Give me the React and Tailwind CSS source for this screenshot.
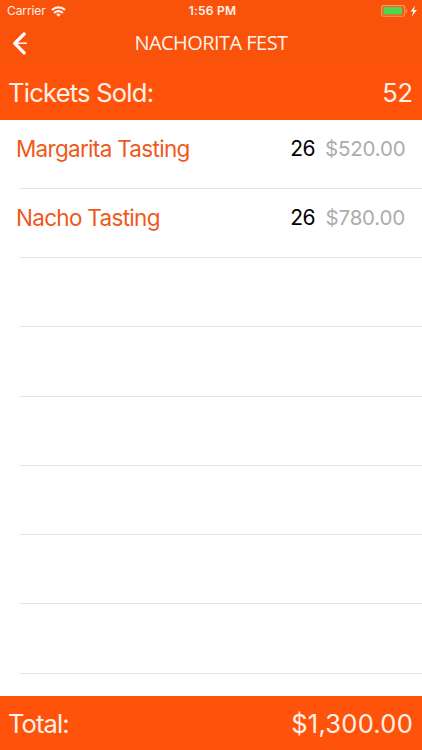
const tickets = [
  { name: "Margarita Tasting", sold: 26, amount: "$520.00" },
  { name: "Nacho Tasting", sold: 26, amount: "$780.00" },
];

const EMPTY_ROWS = 6;

const WifiIcon = () => (
  <svg width="15" height="11" viewBox="0 0 15 11" fill="none" stroke="#fff1e8" strokeWidth="2.1">
    <path d="M0.9 4.1a9.3 9.3 0 0 1 13.2 0" />
    <path d="M3.2 6.9a6.1 6.1 0 0 1 8.6 0" />
    <path d="M7.5 10.8 5.2 8.5a3.3 3.3 0 0 1 4.6 0z" fill="#fff1e8" stroke="none" />
  </svg>
);

const BatteryIcon = () => (
  <svg width="37" height="12" viewBox="0 0 37 12">
    <rect x="0.6" y="0.6" width="23.2" height="10.6" rx="2.2" fill="none" stroke="#ff9a66" strokeWidth="1.1" />
    <rect x="2.2" y="2" width="19" height="7.6" rx="0.8" fill="#4cd654" />
    <path d="M25.2 4.1a2 2 0 0 1 0 3.6z" fill="#ff9a66" />
    <path d="M34.2 0.5 29.6 6.4h2.6l-1.3 5 5-6.4h-2.9z" fill="#fff1e8" />
  </svg>
);

const BackIcon = () => (
  <svg width="16" height="23" viewBox="0 0 16 23" fill="none" stroke="#fff">
    <path d="M12.1 2 2.8 11.4l9.3 9.4" strokeWidth="3.3" strokeLinecap="round" strokeLinejoin="round" />
    <path d="M3 11.2h11.8" strokeWidth="1.5" />
  </svg>
);

const StatusBar = () => (
  <div className="grid h-[22px] grid-cols-3 items-center pr-1 pl-[7px] text-[12px] text-[#fff1e8]">
    <div className="flex items-center gap-[5px]">
      <span className="tracking-[-0.1px]">Carrier</span>
      <WifiIcon />
    </div>
    <span className="text-center font-semibold tracking-[0.25px]">1:56 PM</span>
    <div className="flex justify-end">
      <BatteryIcon />
    </div>
  </div>
);

const TicketRow = ({ ticket }) => (
  <li className="ml-5 h-[69.25px] border-b border-[#e4e4e4]">
    {ticket && (
      <div className="-ml-1 flex h-[58px] items-center pr-[17px]">
        <span className="flex-1 pt-px text-[22.5px] tracking-[-0.7px] text-[#f0591c]">{ticket.name}</span>
        <span className="mr-[10px] text-[21px] tracking-[-0.6px] text-black">{ticket.sold}</span>
        <span className="w-20 pt-0.5 text-right text-[20.5px] tracking-[-0.2px] whitespace-nowrap text-[#adadad]">
          {ticket.amount}
        </span>
      </div>
    )}
  </li>
);

const App = () => {
  return (
    <div className="flex h-[750px] w-[422px] flex-col overflow-hidden bg-white font-['Inter',sans-serif]">
      <header className="h-16 bg-[#f8520b]">
        <StatusBar />
        <div className="grid h-[42px] grid-cols-[1fr_auto_1fr] items-center">
          <button className="ml-3 w-4" aria-label="Back">
            <BackIcon />
          </button>
          <h1 className="font-['Open_Sans',sans-serif] text-[20px] tracking-[-0.55px] text-[#fff1e8]">
            NACHORITA FEST
          </h1>
        </div>
      </header>

      <div className="flex h-[55.5px] items-center justify-between bg-[#ff530b] pt-0.5 pr-[9px] pl-2 text-[25.5px] text-[#fff1e8]">
        <span className="tracking-[-0.75px]">Tickets Sold:</span>
        <span className="tracking-[-0.1px]">52</span>
      </div>

      <ul className="flex-1 overflow-hidden">
        {tickets.map((ticket) => (
          <TicketRow key={ticket.name} ticket={ticket} />
        ))}
        {Array.from({ length: EMPTY_ROWS }, (_, i) => (
          <TicketRow key={i} />
        ))}
      </ul>

      <footer className="flex h-[54.5px] items-center justify-between bg-[#ff530b] pt-0.5 pr-[9px] pl-2 text-[25.5px] text-[#fff1e8]">
        <span className="tracking-[-0.9px]">Total:</span>
        <span className="tracking-[0.25px]">$1,300.00</span>
      </footer>
    </div>
  );
};

export default App;
